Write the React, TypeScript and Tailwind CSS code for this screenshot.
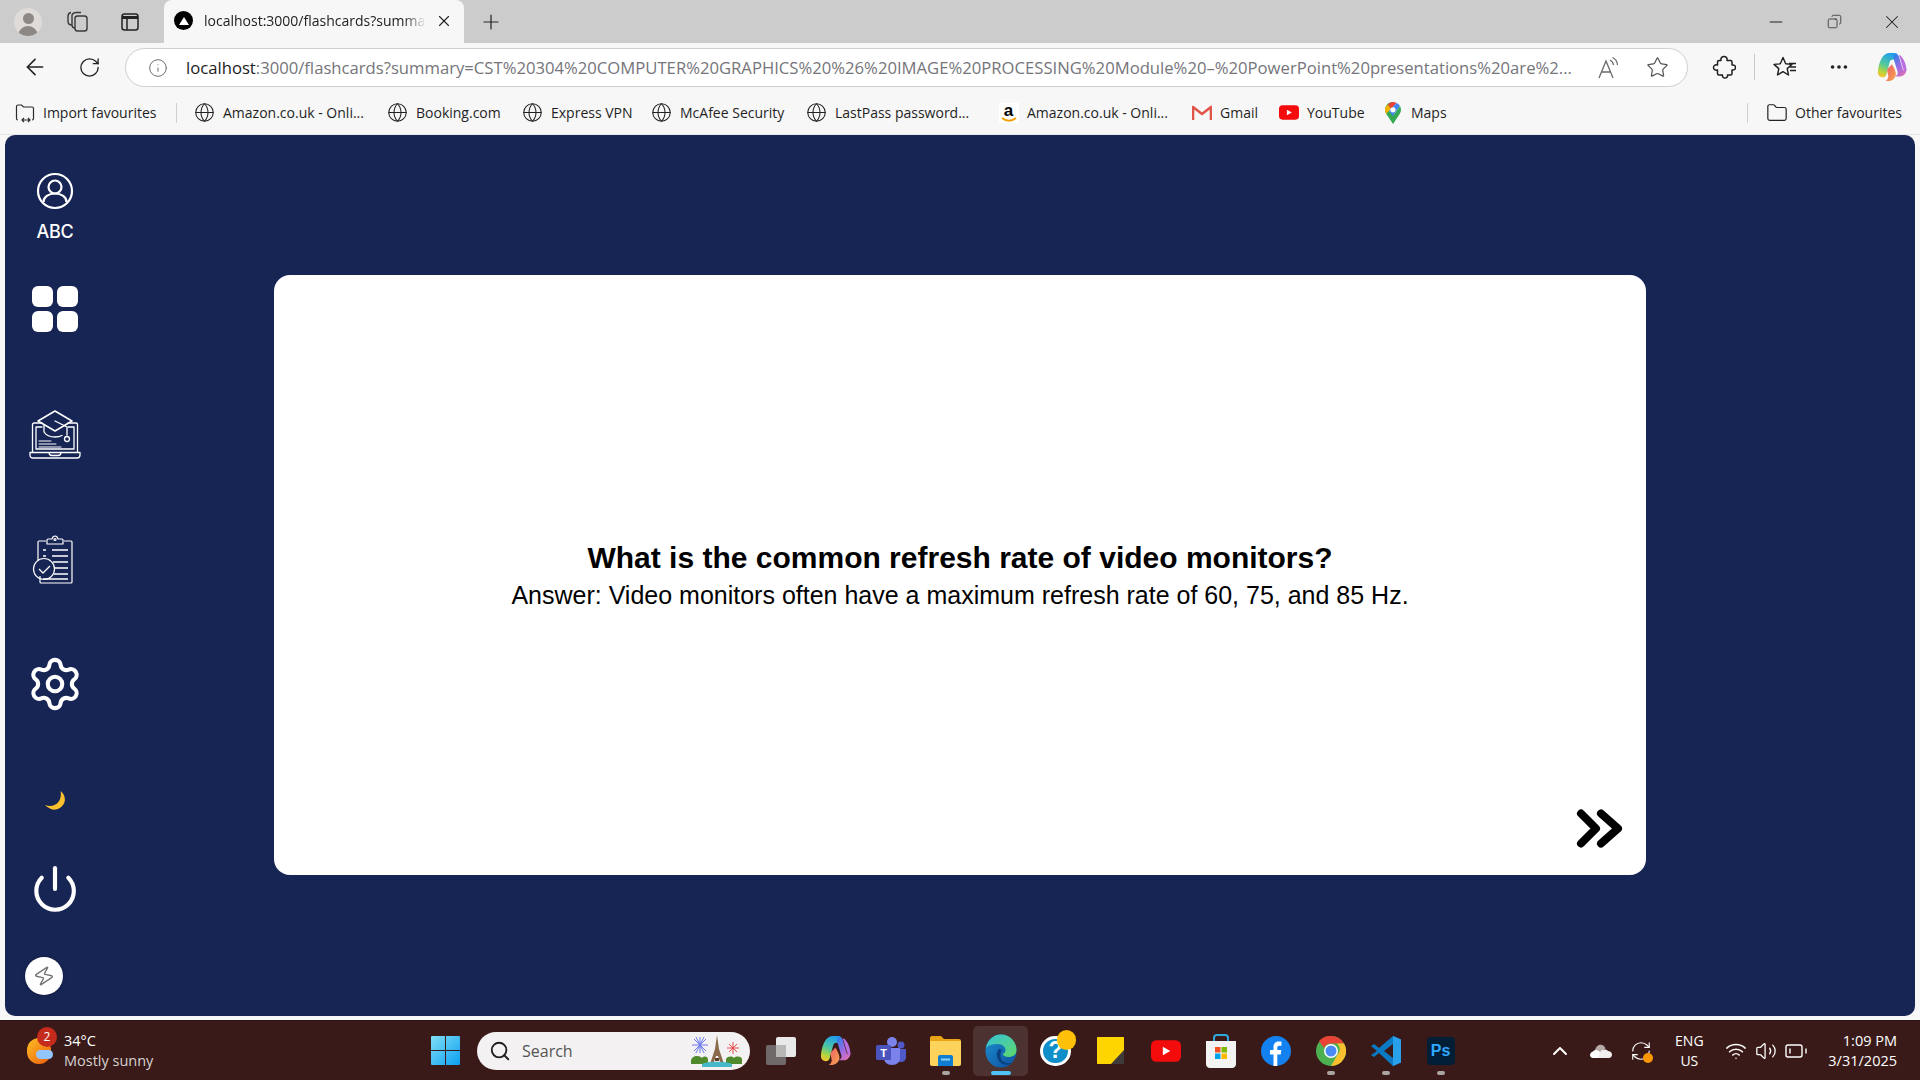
import {
  ArrowLeft,
  BatteryLow,
  ChevronUp,
  Copy,
  Ellipsis,
  Folder,
  Globe,
  Info,
  Minus,
  Plus,
  Power,
  RefreshCw,
  RotateCw,
  Search,
  Settings,
  Star,
  Volume2,
  Wifi,
  X,
  Zap,
} from 'lucide-react';

const URL_REST =
  ':3000/flashcards?summary=CST%20304%20COMPUTER%20GRAPHICS%20%26%20IMAGE%20PROCESSING%20Module%20–%20PowerPoint%20presentations%20are%2...';

function CopilotLogo({ size }: { size: number }) {
  return (
    <svg width={size} height={size} viewBox="0 0 32 32" aria-hidden>
      <defs>
        <linearGradient id={`cp-a-${size}`} x1="0.6" y1="0" x2="0.2" y2="1">
          <stop offset="0" stopColor="#1f9cf0" />
          <stop offset="0.5" stopColor="#4fc8a0" />
          <stop offset="0.8" stopColor="#b6d53c" />
          <stop offset="1" stopColor="#f7c531" />
        </linearGradient>
        <linearGradient id={`cp-b-${size}`} x1="0.2" y1="0" x2="0.8" y2="1">
          <stop offset="0" stopColor="#2f7fe6" />
          <stop offset="0.5" stopColor="#9a6be6" />
          <stop offset="1" stopColor="#e46fb2" />
        </linearGradient>
        <linearGradient id={`cp-c-${size}`} x1="0" y1="0" x2="1" y2="1">
          <stop offset="0" stopColor="#ee5a6a" />
          <stop offset="1" stopColor="#f7a64b" />
        </linearGradient>
      </defs>
      <path d="M19 1c2 0 3 1 3.500 2.500L24 8H17c-2 0-3 1-3.500 3L10 24c-.6 2-2 3-4 3-3.500 0-5.500-3-5-6.500C1.500 15 3 9 6 5c2-2.500 4.500-4 7-4z" fill={`url(#cp-a-${size})`} />
      <path d="M20 2c2 .5 3 2 3.500 3.500l4 13c.4 1.500 2.500 2 4 .5-.5 4-3 7-7 7H19c3-1 3.500-3 3-5l-4-13c-.5-2 -.5-5 2-6z" fill={`url(#cp-b-${size})`} />
      <path d="M26 5c3 3 5 8 5.500 14 0 1.500-2 2-3 .5l-4-13c-.3-1 -.5-2-1.500-3 1.200 0 2.500.5 3.500 1.500z" fill="#b96fe0" />
      <path d="M11 18l5-5c1.500 3 3 5 4 9 .6 3-1 6-4 8-1 .5-3 1-4.500 1H9c2-1 2.500-2.500 3-4 .5-2-1.500-6-1-9z" fill={`url(#cp-c-${size})`} />
    </svg>
  );
}

function AmazonIcon() {
  return (
    <span className="relative flex h-[20px] w-[20px] items-start justify-center bg-white">
      <span className="text-[17px] font-bold leading-[15px] text-black [font-family:'Liberation_Sans',sans-serif]">a</span>
      <svg width="16" height="6" viewBox="0 0 16 6" className="absolute bottom-[0px]" aria-hidden>
        <path d="M1 1c4 3.500 10 3.500 14 0" fill="none" stroke="#f59e0b" strokeWidth="2" />
      </svg>
    </span>
  );
}

function GmailIcon() {
  return (
    <svg width="20" height="16" viewBox="0 0 20 16" aria-hidden>
      <path d="M1 15V2l9 7 9-7v13" fill="none" stroke="#e0564a" strokeWidth="2.600" strokeLinejoin="round" />
    </svg>
  );
}

function YouTubeIcon({ w, h }: { w: number; h: number }) {
  return (
    <svg width={w} height={h} viewBox="0 0 28 20" aria-hidden>
      <rect width="28" height="20" rx="5" fill="#f40b0b" />
      <path d="M11 6l7 4-7 4z" fill="#fff" />
    </svg>
  );
}

function MapsIcon() {
  return (
    <svg width="16" height="22" viewBox="0 0 16 22" aria-hidden>
      <path d="M8 0C3.500 0 0 3.400 0 7.800c0 1.500.4 2.700 1.200 3.900L8 22l2-8-6-5z" fill="#34a853" />
      <path d="M0 7.800c0 1.500.4 2.700 1.200 3.900L6 7 3 2.500C1.200 3.800 0 5.600 0 7.800z" fill="#f4b400" />
      <path d="M3 2.500L6 7l5.500-6C10.500.4 9.300 0 8 0 6 0 4.300.9 3 2.500z" fill="#ea4335" />
      <path d="M11.500 1L4 9l4 5 6.800-10C14.200 2.700 13 1.700 11.500 1z" fill="#4285f4" />
      <path d="M8 22l6.800-10.300c.8-1.200 1.200-2.400 1.200-3.900 0-1.400-.4-2.700-1-3.800L8 14z" fill="#34a853" />
      <circle cx="8" cy="7.800" r="2.600" fill="#fff" />
    </svg>
  );
}

function ImportIcon() {
  return (
    <svg width="20" height="20" viewBox="0 0 20 20" fill="none" stroke="#2b2b2b" strokeWidth="1.200" aria-hidden>
      <path d="M3 17c-1 0-1.500-.6-1.500-1.500V3.500C1.500 2.600 2 2 3 2h3.500l2 2H17c1 0 1.500.6 1.500 1.500v10c0 .9-.5 1.500-1.500 1.500" />
      <path d="M7 17h8M9 15l-2 2 2 2M13 15l2 2-2 2" />
    </svg>
  );
}

function PuzzleIcon() {
  return (
    <svg width="24" height="24" viewBox="0 0 24 24" fill="none" stroke="#1f1f1f" strokeWidth="1.500" strokeLinejoin="round" aria-hidden>
      <path d="M9 5.500C8.500 3 10 1.500 12 1.500S15.500 3 15 5.500h3.500c.8 0 1.500.7 1.500 1.500v3c2.500-.5 3.500 1 3.500 2.500S22.500 15.500 20 15v3.500c0 .8-.7 1.500-1.500 1.500H15.500c.4 2-1 3-2.500 3s-3-1-2.500-3H7c-.8 0-1.500-.7-1.500-1.500V15C3 15.500 1.500 14.500 1.500 12.500S3 9.500 5.500 10V7c0-.8.700-1.500 1.500-1.500z" />
    </svg>
  );
}

function FavouritesIcon() {
  return (
    <svg width="24" height="22" viewBox="0 0 24 22" fill="none" stroke="#1f1f1f" strokeWidth="1.400" strokeLinejoin="round" aria-hidden>
      <path d="M10 1.500l2.700 6.300 6.300.6-4.800 4.200 1.300 6.400-5.500-3.400-5.500 3.400 1.300-6.400L1 8.400l6.300-.6z" />
      <path d="M16 7.500h7M17 11h6M17 14.500h6" />
    </svg>
  );
}

function ReadAloudIcon() {
  return (
    <svg width="24" height="24" viewBox="0 0 24 24" fill="none" stroke="#6a6a6a" strokeWidth="1.300" aria-hidden>
      <path d="M2 22L9 5l7 17M4.500 16h9" />
      <path d="M13 4c2 1 3.200 2.800 3.500 5M15.500 1.500c3 1.500 4.800 4 5 7.500" />
    </svg>
  );
}

function CollectionsIcon() {
  return (
    <svg width="22" height="24" viewBox="0 0 22 24" fill="none" stroke="#3a3a3a" strokeWidth="1.400" strokeLinejoin="round" aria-hidden>
      <rect x="9" y="6" width="12" height="15" rx="2.500" />
      <path d="M9 18c-1.500 0-3-1-3-3V5c1-2 2-2.500 4-2.500h5" />
      <path d="M6 15c-2 0-4-1-4-3.500V6c0-2 1-3 3-3.500" />
    </svg>
  );
}

function VerticalTabsIcon() {
  return (
    <svg width="20" height="20" viewBox="0 0 20 20" fill="none" stroke="#222" strokeWidth="1.500" aria-hidden>
      <rect x="2" y="2" width="16" height="16" rx="2.500" />
      <path d="M2 5.500h16" strokeWidth="3" />
      <path d="M7 5.500V18" />
    </svg>
  );
}

function AvatarIcon() {
  return (
    <svg width="38" height="38" viewBox="0 0 38 38" fill="none" stroke="#fff" strokeWidth="2.200" aria-hidden>
      <circle cx="19" cy="19" r="17" />
      <circle cx="19" cy="15" r="6.500" />
      <path d="M7.500 30c0-5 5-8.500 11.500-8.500S30.500 25 30.500 30" />
    </svg>
  );
}

function CourseIcon() {
  return (
    <svg width="52" height="50" viewBox="0 0 52 50" fill="none" stroke="#fff" strokeWidth="1.300" strokeLinejoin="round" strokeLinecap="round" aria-hidden>
      <path d="M13 13H5c-.8 0-1.500.7-1.500 1.500V42M39 13h8c.8 0 1.500.7 1.500 1.500V42" />
      <path d="M7 17h6M39 17h6M7 17v22h38V17" />
      <path d="M1 42.500h50v2.500c0 2-1 3-3 3H4c-2 0-3-1-3-3z" />
      <path d="M20 42.500c0 2 1 3 3 3h6c2 0 3-1 3-3" />
      <path d="M26 1l17 10-17 10L9 11z" strokeWidth="1.500" />
      <path d="M15 15v7c2 3 6 5 11 5 3 0 5-.5 7-1.500" />
      <path d="M26 11l12 6v8" />
      <circle cx="38" cy="29" r="2.500" />
      <path d="M10 31h12M10 34h17M10 37h22" strokeWidth="1" />
    </svg>
  );
}

function ClipboardIcon() {
  return (
    <svg width="46" height="50" viewBox="0 0 46 50" fill="none" stroke="#fff" strokeWidth="1.200" strokeLinejoin="round" aria-hidden>
      <path d="M14 6H7c-.8 0-1 .5-1 1v18M32 6h7c.7 0 1 .4 1 1v40c0 .6-.4 1-1 1H9c-.7 0-1-.4-1-1v-6" />
      <path d="M15 9V5c0-.6.4-1 1-1h4c.5-2 1.500-3 3-3s2.500 1 3 3h4c.6 0 1 .4 1 1v4z" />
      <circle cx="23" cy="4.500" r="1" />
      <path d="M11 15h3M11 21h3M20 15h16M20 21h16M21 27h15M22 33h14M22 39h14M11 44h25" strokeWidth="1.600" />
      <circle cx="12" cy="34" r="10.500" />
      <path d="M7 34l4 4 7-7" strokeWidth="1.300" />
    </svg>
  );
}

function MoonIcon() {
  return (
    <svg width="20" height="19" viewBox="0 0 20 19" aria-hidden>
      <path d="M15.500 0c4 3 5.500 8 3.500 12.500-2.500 5-9 7.500-13 5.500C4 17.300 1.500 15.500 0 14c5 2 10 1 13-2.500 2.500-3 3.500-7.500 2.500-11.500z" fill="#fbc02d" />
    </svg>
  );
}

function NextArrowIcon() {
  return (
    <svg width="48" height="39" viewBox="0 0 48 39" fill="none" stroke="#000" strokeWidth="8" strokeLinecap="round" strokeLinejoin="round" aria-hidden>
      <path d="M5 4.500l15 15-15 15M25 4.500l17 15-17 15" />
    </svg>
  );
}

function WindowsIcon() {
  return (
    <svg width="29" height="29" viewBox="0 0 29 29" aria-hidden>
      <defs>
        <linearGradient id="win" x1="0" y1="0" x2="1" y2="1">
          <stop offset="0" stopColor="#7fe0f5" />
          <stop offset="1" stopColor="#0b9ef0" />
        </linearGradient>
      </defs>
      <path d="M0 1a1 1 0 011-1h13v14H0zM15 0h13a1 1 0 011 1v13H15zM0 15h14v14H1a1 1 0 01-1-1zM15 15h14v13a1 1 0 01-1 1H15z" fill="url(#win)" />
    </svg>
  );
}

function SearchArt() {
  return (
    <svg width="54" height="34" viewBox="0 0 54 34" aria-hidden>
      <g stroke="#6a7bea" strokeWidth="1">
        <path d="M10 3v16M2 11h16M4 5l12 12M16 5L4 17M6 3l8 16M14 3L6 19" />
      </g>
      <g stroke="#e5484d" strokeWidth="1">
        <path d="M43 8v12M37 14h12M39 10l8 8M47 10l-8 8" />
      </g>
      <path d="M27 1l2 14 5 15h-3l-3-8h-2l-3 8h-3l5-15z" fill="#8a6a4a" />
      <path d="M25 24h4v3h-4z" fill="#5b3f2a" />
      <path d="M1 27c0-3 3-5 6-5s4 1 5 2c2-2 5-2 6 1v5H1zM36 25c2-3 6-3 8-1 2-2 7-2 8 1v5H36z" fill="#4f8a2c" />
      <path d="M12 30c5-3 25-3 30 0v3H12z" fill="#47b8c9" />
    </svg>
  );
}

function TaskViewIcon() {
  return (
    <span className="relative block h-[28px] w-[30px]">
      <span className="absolute bottom-0 left-0 h-[20px] w-[20px] rounded-[2px] bg-[#6f6a69]" />
      <span className="absolute right-0 top-0 h-[20px] w-[20px] rounded-[2px] bg-[#e9e9e9]" />
      <span className="absolute left-[10px] top-[8px] h-[12px] w-[10px] bg-[#b9b7b6]" />
    </span>
  );
}

function TeamsIcon() {
  return (
    <svg width="30" height="30" viewBox="0 0 30 30" aria-hidden>
      <circle cx="25" cy="9" r="3.500" fill="#5059c9" />
      <circle cx="16" cy="6" r="5" fill="#7b83eb" />
      <path d="M20 13h9c.6 0 1 .4 1 1v7c0 3-2 5-5 5s-5-2-5-5z" fill="#5059c9" />
      <path d="M8 12h15c.6 0 1 .4 1 1v9c0 4-3 7-8 7s-8-3-8-7z" fill="#7b83eb" />
      <rect x="0" y="9" width="15" height="15" rx="1.500" fill="#4b53bc" />
      <text x="7.500" y="21" textAnchor="middle" fontSize="11" fontWeight="700" fill="#fff" fontFamily="Liberation Sans, sans-serif">T</text>
    </svg>
  );
}

function ExplorerIcon() {
  return (
    <svg width="31" height="30" viewBox="0 0 31 30" aria-hidden>
      <path d="M0 2c0-1 .6-2 2-2h9l3 3h15c1 0 2 .8 2 2v5H0z" fill="#e8a317" />
      <path d="M0 5h31v23c0 1-.8 2-2 2H2c-1.200 0-2-.8-2-2z" fill="#fdd35b" />
      <path d="M8 21c0-1 .6-2 2-2h11c1.400 0 2 1 2 2v9H8z" fill="#0f7ed0" />
      <path d="M11 23.500h9" stroke="#8ed2f7" strokeWidth="2" />
    </svg>
  );
}

function EdgeIcon() {
  return (
    <svg width="32" height="34" viewBox="0 0 32 34" aria-hidden>
      <defs>
        <linearGradient id="edge-a" x1="0" y1="0" x2="1" y2="1">
          <stop offset="0" stopColor="#36c0d8" />
          <stop offset="1" stopColor="#5fd86a" />
        </linearGradient>
        <linearGradient id="edge-b" x1="0" y1="0" x2="1" y2="1">
          <stop offset="0" stopColor="#1e8fd0" />
          <stop offset="1" stopColor="#0c4f9c" />
        </linearGradient>
      </defs>
      <ellipse cx="16" cy="17" rx="15.500" ry="16.500" fill="url(#edge-b)" />
      <path d="M1 14C3 5 9 .5 16 .5 25 .5 31.500 8 31.500 16c0 5-4 7-8 7-3 0-5-1-6-3 2-1 3-2 3-4 0-3-3-6-8-6-5 0-9 1-11.500 4z" fill="url(#edge-a)" />
      <path d="M14 15c-3 3-3 9 1 13 3 3 8 4 12 1-4 1-9 0-11-4-1-3-1-7 1-9z" fill="#0a3f80" />
    </svg>
  );
}

function HelpIcon() {
  return (
    <span className="relative flex h-[30px] w-[31px] items-center justify-center rounded-full border-[3px] border-white bg-[#0f8fc9] text-[23px] font-bold leading-none text-white [font-family:'Liberation_Sans',sans-serif]">
      ?
      <span className="absolute -right-[8px] -top-[9px] h-[20px] w-[19px] rounded-full bg-[#ffc107]" />
    </span>
  );
}

function StickyIcon() {
  return (
    <svg width="27" height="27" viewBox="0 0 27 27" aria-hidden>
      <path d="M1 0h25c.6 0 1 .4 1 1v14L15 27H1c-.6 0-1-.4-1-1V1c0-.6.4-1 1-1z" fill="#ffd500" />
      <path d="M27 13v13c0 .6-.4 1-1 1H14z" fill="#3e3b3a" />
    </svg>
  );
}

function StoreIcon() {
  return (
    <svg width="30" height="34" viewBox="0 0 30 34" aria-hidden>
      <path d="M8 7V4c0-2 1-3 3-3h8c2 0 3 1 3 3v3" fill="none" stroke="#2fa8e0" strokeWidth="2" />
      <path d="M0 7h30v23c0 2-1.500 4-4 4H4c-2.500 0-4-2-4-4z" fill="#f3f3f3" />
      <rect x="9" y="13" width="5.500" height="5.500" fill="#f25022" />
      <rect x="15.500" y="13" width="5.500" height="5.500" fill="#7fba00" />
      <rect x="9" y="19.500" width="5.500" height="5.500" fill="#00a4ef" />
      <rect x="15.500" y="19.500" width="5.500" height="5.500" fill="#ffb900" />
    </svg>
  );
}

function FacebookIcon() {
  return (
    <svg width="30" height="30" viewBox="0 0 30 30" aria-hidden>
      <circle cx="15" cy="15" r="15" fill="#1382f0" />
      <path d="M12.500 30V18.500H9V14h3.500v-3c0-3.500 2-5.500 5.200-5.500 1.300 0 2.300.1 2.800.2v4h-2c-1.600 0-2.200.8-2.200 2V14h4l-.6 4.500H16.300V30z" fill="#fff" />
    </svg>
  );
}

function ChromeIcon() {
  return (
    <svg width="30" height="30" viewBox="0 0 30 30" aria-hidden>
      <circle cx="15" cy="15" r="15" fill="#4caf50" />
      <path d="M15 0a15 15 0 0113 7.500H15A7.500 7.500 0 008 12L3 5a15 15 0 0112-5z" fill="#ea4335" />
      <path d="M28 7.500A15 15 0 0115 30l6.500-11.200A7.500 7.500 0 0021 7.500z" fill="#fbc02d" />
      <circle cx="15" cy="15" r="7" fill="#fff" />
      <circle cx="15" cy="15" r="5.500" fill="#4a8af4" />
    </svg>
  );
}

function VsCodeIcon() {
  return (
    <svg width="30" height="30" viewBox="0 0 30 30" aria-hidden>
      <path d="M22 0l8 3.500v23L22 30 8 17l-5 4-3-2 6-4-6-5 3-2 5 4z" fill="#0a7ac4" />
      <path d="M22 0l8 3.500v23L22 30z" fill="#28a0ea" />
      <path d="M22 8v14l-9-7z" fill="#3a1a18" />
    </svg>
  );
}

function OneDriveIcon() {
  return (
    <svg width="22" height="14" viewBox="0 0 22 14" aria-hidden>
      <path d="M5 6c1-4 4-6 7-5 2 .5 3 2 3.500 3.500L8 9z" fill="#b5aaa8" />
      <path d="M3 14C1 14 0 12.500 0 11s1-3 3-3.500C5 5 8 6 10 8l3 6z" fill="#fff" />
      <path d="M10 8c2-3 6-3 8-1 2 0 4 1.500 4 3.500S20.500 14 19 14H8z" fill="#f1efef" />
    </svg>
  );
}

const BOOKMARKS: { label: string; icon: 'globe' | 'amazon' | 'gmail' | 'youtube' | 'maps'; cls: string }[] = [
  { label: 'Amazon.co.uk - Onli...', icon: 'globe', cls: 'w-[193px]' },
  { label: 'Booking.com', icon: 'globe', cls: 'w-[135px]' },
  { label: 'Express VPN', icon: 'globe', cls: 'w-[129px]' },
  { label: 'McAfee Security', icon: 'globe', cls: 'w-[155px]' },
  { label: 'LastPass password...', icon: 'globe', cls: 'w-[192px]' },
  { label: 'Amazon.co.uk - Onli...', icon: 'amazon', cls: 'w-[193px]' },
  { label: 'Gmail', icon: 'gmail', cls: 'w-[87px]' },
  { label: 'YouTube', icon: 'youtube', cls: 'w-[104px]' },
  { label: 'Maps', icon: 'maps', cls: 'w-[80px]' },
];

function BookmarkIcon({ icon }: { icon: string }) {
  if (icon === 'amazon') return <AmazonIcon />;
  if (icon === 'gmail') return <GmailIcon />;
  if (icon === 'youtube') return <YouTubeIcon w={20} h={15} />;
  if (icon === 'maps') return <MapsIcon />;
  return <Globe size={21} strokeWidth={1.200} className="text-[#222]" aria-hidden />;
}

function BrowserChrome() {
  return (
    <header className="shrink-0 [font-family:'Open_Sans',sans-serif]">
      <div className="flex h-[43px] items-center bg-[#cccccc]">
        <div className="ml-[14px] flex h-[28px] w-[28px] items-center justify-center overflow-hidden rounded-full bg-[#dedbd8]">
          <span className="relative block h-full w-full">
            <span className="absolute left-[9px] top-[5px] h-[11px] w-[11px] rounded-full bg-[#8d8883]" />
            <span className="absolute left-[4px] top-[18px] h-[16px] w-[20px] rounded-t-full bg-[#8d8883]" />
          </span>
        </div>
        <div className="ml-[24px] flex w-[22px] justify-center"><CollectionsIcon /></div>
        <div className="ml-[32px] flex w-[20px] justify-center"><VerticalTabsIcon /></div>
        <div className="ml-[24px] flex h-[43px] w-[300px] items-center self-end rounded-t-[8px] bg-[#f7f7f7] pb-[2px] pl-[10px] pr-[11px]">
          <span className="flex h-[19px] w-[19px] shrink-0 items-center justify-center rounded-full bg-black">
            <span className="h-0 w-0 border-x-[5px] border-b-[8px] border-x-transparent border-b-white" />
          </span>
          <span className="ml-[11px] w-[222px] overflow-hidden whitespace-nowrap text-[14px] text-[#222] [mask-image:linear-gradient(to_right,black_90%,transparent)]">
            localhost:3000/flashcards?summa
          </span>
          <X size={18} strokeWidth={1.500} className="ml-auto text-[#222]" aria-hidden />
        </div>
        <Plus size={24} strokeWidth={1.200} className="ml-[15px] text-[#222]" aria-hidden />
        <div className="ml-auto flex items-center pr-[17px]">
          <Minus size={20} strokeWidth={1.200} className="text-[#222]" aria-hidden />
          <Copy size={15} strokeWidth={1.200} className="ml-[41px] -scale-x-100 text-[#222]" aria-hidden />
          <X size={22} strokeWidth={1.100} className="ml-[39px] text-[#222]" aria-hidden />
        </div>
      </div>

      <div className="flex h-[48px] items-center bg-[#f7f7f7]">
        <ArrowLeft size={26} strokeWidth={1.500} className="ml-[22px] text-[#222]" aria-hidden />
        <RotateCw size={23} strokeWidth={1.400} className="ml-[30px] text-[#222]" aria-hidden />
        <div className="ml-[24px] mt-[1px] flex h-[39px] w-[1563px] items-center rounded-full border border-[#cfcfcf] bg-white pl-[22px] pr-[18px]">
          <Info size={20} strokeWidth={1.200} className="text-[#6f6f6f]" aria-hidden />
          <span className="ml-[18px] w-[1385px] overflow-hidden whitespace-nowrap pt-[1px] text-[16.660px] text-[#75757a]">
            <span className="text-[#1c1c1c]">localhost</span>
            {URL_REST}
          </span>
          <span className="ml-[26px] flex items-center"><ReadAloudIcon /></span>
          <Star size={23} strokeWidth={1.300} className="ml-[25px] text-[#555]" aria-hidden />
        </div>
        <span className="ml-[24px] flex items-center"><PuzzleIcon /></span>
        <span className="ml-[18px] h-[26px] w-px bg-[#c9c9c9]" />
        <span className="ml-[18px] flex items-center"><FavouritesIcon /></span>
        <Ellipsis size={22} strokeWidth={2} className="ml-[31px] text-[#222]" aria-hidden />
        <span className="ml-[27px] flex items-center"><CopilotLogo size={30} /></span>
      </div>

      <div className="flex h-[44px] items-center border-b border-[#e6e6e6] bg-[#f7f7f7] text-[14px] text-[#1f1f1f]">
        <div className="ml-[15px] flex w-[142px] items-center gap-[8px]">
          <ImportIcon />
          <span className="whitespace-nowrap">Import favourites</span>
        </div>
        <span className="ml-[19px] h-[20px] w-px bg-[#d0d0d0]" />
        <div className="ml-[17px] flex">
          {BOOKMARKS.map((b, i) => (
            <div key={i} className={`flex items-center gap-[8px] ${b.cls}`}>
              <span className="flex w-[21px] justify-center"><BookmarkIcon icon={b.icon} /></span>
              <span className="whitespace-nowrap">{b.label}</span>
            </div>
          ))}
        </div>
        <span className="ml-auto h-[20px] w-px bg-[#d0d0d0]" />
        <div className="ml-[18px] mr-[18px] flex items-center gap-[7px]">
          <Folder size={22} strokeWidth={1.300} className="text-[#222]" aria-hidden />
          <span className="whitespace-nowrap">Other favourites</span>
        </div>
      </div>
    </header>
  );
}

function Sidebar() {
  return (
    <aside className="flex w-[100px] shrink-0 flex-col items-center self-start pt-[37px] text-white">
      <AvatarIcon />
      <span className="mt-[10px] text-[18px] font-medium leading-[24px] tracking-[-0.3px] [font-family:Inter,sans-serif]">ABC</span>
      <div className="mt-[42px] grid grid-cols-2 gap-[4px]">
        <span className="h-[21px] w-[21px] rounded-[6px] bg-white" />
        <span className="h-[21px] w-[21px] rounded-[6px] bg-white" />
        <span className="h-[21px] w-[21px] rounded-[6px] bg-white" />
        <span className="h-[21px] w-[21px] rounded-[6px] bg-white" />
      </div>
      <div className="mt-[78px]"><CourseIcon /></div>
      <div className="mt-[75px]"><ClipboardIcon /></div>
      <Settings size={58} strokeWidth={1.700} className="mt-[70px]" aria-hidden />
      <div className="mt-[78px]"><MoonIcon /></div>
      <Power size={50} strokeWidth={2} className="mt-[54px]" aria-hidden />
    </aside>
  );
}

function FlashcardPanel() {
  return (
    <main className="relative mx-[5px] flex flex-1 items-center rounded-[10px] bg-[#172554] pb-[1px]">
      <Sidebar />
      <section className="relative ml-[169px] flex h-[600px] w-[1372px] flex-col items-center justify-center rounded-[16px] bg-white text-black [font-family:'Liberation_Sans',sans-serif]">
        <h1 className="text-[30px] font-bold leading-[36px]">What is the common refresh rate of video monitors?</h1>
        <p className="mt-[3px] text-[25px] leading-[32px]">Answer: Video monitors often have a maximum refresh rate of 60, 75, and 85 Hz.</p>
        <span className="absolute bottom-[27px] right-[22px]"><NextArrowIcon /></span>
      </section>
      <span className="absolute bottom-[21px] left-[20px] flex h-[38px] w-[38px] items-center justify-center rounded-full bg-white shadow-[0_0_3px_rgba(0,0,0,0.4)]">
        <Zap size={22} strokeWidth={1.600} className="rotate-12 text-[#777]" aria-hidden />
      </span>
    </main>
  );
}

function Slot({ children, dot, active }: { children: React.ReactNode; dot?: boolean; active?: boolean }) {
  return (
    <div className={`relative flex h-[50px] w-[55px] items-center justify-center rounded-[5px] ${active ? 'bg-[#4c3230]' : ''}`}>
      {children}
      {dot && <span className="absolute bottom-[1px] h-[4px] w-[8px] rounded-full bg-[#a9a3a2]" />}
      {active && <span className="absolute bottom-[1px] h-[4px] w-[20px] rounded-full bg-[#4fc3f7]" />}
    </div>
  );
}

function Taskbar() {
  return (
    <footer className="mt-[4px] flex h-[60px] shrink-0 items-center border-t border-[#2b1513] bg-[#3a1a18] text-white [font-family:'Open_Sans',sans-serif]">
      <div className="ml-[27px] flex w-[404px] items-center">
        <span className="relative block h-[26px] w-[27px]">
          <span className="absolute left-0 top-0 h-[26px] w-[24px] rounded-full bg-gradient-to-br from-[#fbbf24] to-[#ea580c]" />
          <span className="absolute bottom-[5px] left-[9px] h-[9px] w-[17px] rounded-full bg-[#93c5fd]" />
          <span className="absolute -top-[11px] left-[10px] flex h-[20px] w-[20px] items-center justify-center rounded-full bg-[#c42b1c] text-[12px]">2</span>
        </span>
        <div className="ml-[10px] flex flex-col text-[14.500px] leading-[20px]">
          <span>34°C</span>
          <span className="text-[#d6d2d1]">Mostly sunny</span>
        </div>
      </div>
      <WindowsIcon />
      <div className="ml-[17px] flex h-[38px] w-[273px] items-center rounded-full bg-[#f3f1f1] pl-[12px] pr-[6px]">
        <Search size={22} strokeWidth={2} className="text-[#1f1f1f]" aria-hidden />
        <span className="ml-[11px] text-[16px] text-[#555]">Search</span>
        <span className="ml-auto flex items-center"><SearchArt /></span>
      </div>
      <div className="ml-[3px] flex items-center">
        <Slot><TaskViewIcon /></Slot>
        <Slot><CopilotLogo size={31} /></Slot>
        <Slot><TeamsIcon /></Slot>
        <Slot dot><ExplorerIcon /></Slot>
        <Slot active><EdgeIcon /></Slot>
        <Slot><HelpIcon /></Slot>
        <Slot><StickyIcon /></Slot>
        <Slot><YouTubeIcon w={30} h={22} /></Slot>
        <Slot><StoreIcon /></Slot>
        <Slot><FacebookIcon /></Slot>
        <Slot dot><ChromeIcon /></Slot>
        <Slot dot><VsCodeIcon /></Slot>
        <Slot dot>
          <span className="flex h-[28px] w-[28px] items-center justify-center rounded-[4px] bg-[#001e36] text-[16px] font-bold text-[#31a8ff] [font-family:'Liberation_Sans',sans-serif]">Ps</span>
        </Slot>
      </div>
      <div className="ml-auto flex items-center pr-[23px]">
        <ChevronUp size={24} strokeWidth={2} aria-hidden />
        <span className="ml-[18px] flex items-center"><OneDriveIcon /></span>
        <span className="relative ml-[18px] flex items-center">
          <RefreshCw size={22} strokeWidth={1.200} aria-hidden />
          <span className="absolute -bottom-[1px] right-[-1px] h-[10px] w-[10px] rounded-full bg-[#ff9800]" />
        </span>
        <div className="ml-[20px] flex w-[34px] flex-col items-center text-[14px] leading-[20px]">
          <span>ENG</span>
          <span>US</span>
        </div>
        <Wifi size={22} strokeWidth={1.700} className="ml-[19px]" aria-hidden />
        <Volume2 size={22} strokeWidth={1.400} className="ml-[8px]" aria-hidden />
        <BatteryLow size={24} strokeWidth={1.400} className="ml-[7px]" aria-hidden />
        <div className="ml-[20px] flex flex-col items-end text-[14.500px] leading-[20px]">
          <span>1:09 PM</span>
          <span>3/31/2025</span>
        </div>
      </div>
    </footer>
  );
}

export default function App() {
  return (
    <div className="flex h-screen w-[1920px] flex-col overflow-hidden bg-[#f7f7f7]">
      <BrowserChrome />
      <FlashcardPanel />
      <Taskbar />
    </div>
  );
}
